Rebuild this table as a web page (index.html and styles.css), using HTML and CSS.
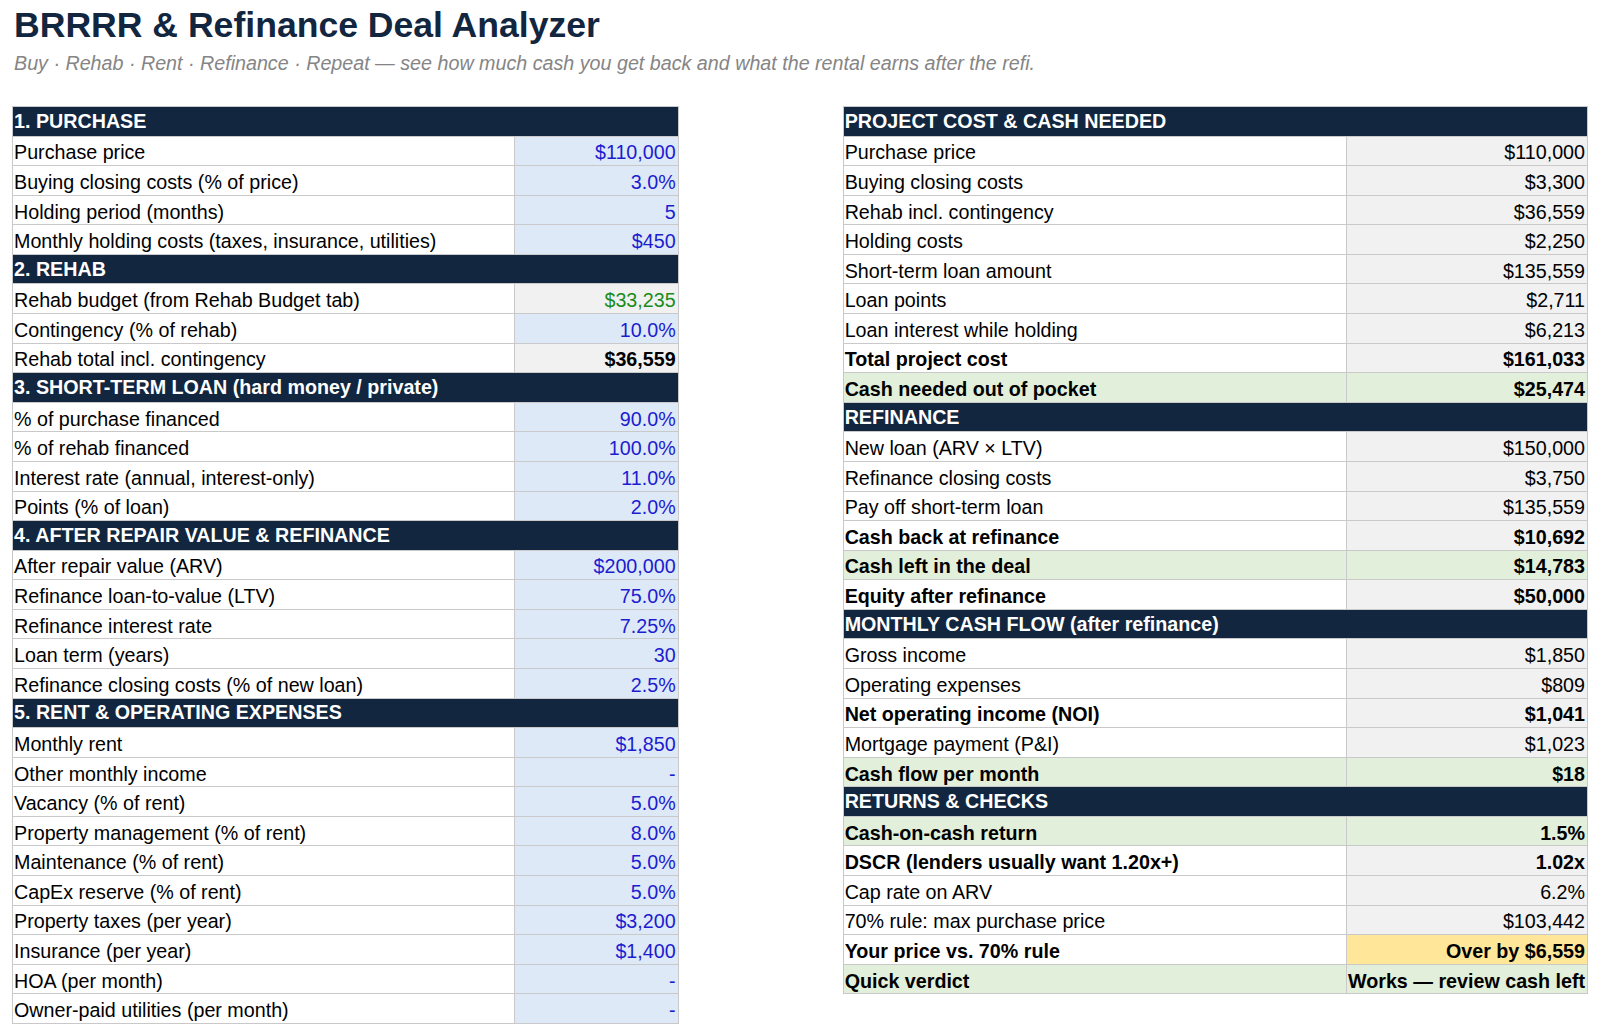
FILE: index.html
```html
<!DOCTYPE html>
<html>
<head>
    <meta charset="UTF-8">
    <title>BRRRR &amp; Refinance Deal Analyzer</title>
    <link rel="stylesheet" href="styles.css">
</head>
<body>
    <h1 class="title">BRRRR &amp; Refinance Deal Analyzer</h1>
    <p class="subtitle">Buy · Rehab · Rent · Refinance · Repeat — see how much cash you get back and what the rental earns after the refi.</p>

    <div class="sheets">
        <table class="sheet sheet-inputs">
            <colgroup><col class="col-label"><col class="col-value"></colgroup>
            <tr class="section"><td colspan="2">1. PURCHASE</td></tr>
            <tr><td>Purchase price</td><td class="input">$110,000</td></tr>
            <tr><td>Buying closing costs (% of price)</td><td class="input">3.0%</td></tr>
            <tr><td>Holding period (months)</td><td class="input">5</td></tr>
            <tr><td>Monthly holding costs (taxes, insurance, utilities)</td><td class="input">$450</td></tr>

            <tr class="section"><td colspan="2">2. REHAB</td></tr>
            <tr><td>Rehab budget (from Rehab Budget tab)</td><td class="calc linked">$33,235</td></tr>
            <tr><td>Contingency (% of rehab)</td><td class="input">10.0%</td></tr>
            <tr class="strong"><td class="plain">Rehab total incl. contingency</td><td class="calc">$36,559</td></tr>

            <tr class="section"><td colspan="2">3. SHORT-TERM LOAN (hard money / private)</td></tr>
            <tr><td>% of purchase financed</td><td class="input">90.0%</td></tr>
            <tr><td>% of rehab financed</td><td class="input">100.0%</td></tr>
            <tr><td>Interest rate (annual, interest-only)</td><td class="input">11.0%</td></tr>
            <tr><td>Points (% of loan)</td><td class="input">2.0%</td></tr>

            <tr class="section"><td colspan="2">4. AFTER REPAIR VALUE &amp; REFINANCE</td></tr>
            <tr><td>After repair value (ARV)</td><td class="input">$200,000</td></tr>
            <tr><td>Refinance loan-to-value (LTV)</td><td class="input">75.0%</td></tr>
            <tr><td>Refinance interest rate</td><td class="input">7.25%</td></tr>
            <tr><td>Loan term (years)</td><td class="input">30</td></tr>
            <tr><td>Refinance closing costs (% of new loan)</td><td class="input">2.5%</td></tr>

            <tr class="section"><td colspan="2">5. RENT &amp; OPERATING EXPENSES</td></tr>
            <tr><td>Monthly rent</td><td class="input">$1,850</td></tr>
            <tr><td>Other monthly income</td><td class="input">-</td></tr>
            <tr><td>Vacancy (% of rent)</td><td class="input">5.0%</td></tr>
            <tr><td>Property management (% of rent)</td><td class="input">8.0%</td></tr>
            <tr><td>Maintenance (% of rent)</td><td class="input">5.0%</td></tr>
            <tr><td>CapEx reserve (% of rent)</td><td class="input">5.0%</td></tr>
            <tr><td>Property taxes (per year)</td><td class="input">$3,200</td></tr>
            <tr><td>Insurance (per year)</td><td class="input">$1,400</td></tr>
            <tr><td>HOA (per month)</td><td class="input">-</td></tr>
            <tr><td>Owner-paid utilities (per month)</td><td class="input">-</td></tr>
        </table>

        <table class="sheet sheet-results">
            <colgroup><col class="col-label"><col class="col-value"></colgroup>
            <tr class="section"><td colspan="2">PROJECT COST &amp; CASH NEEDED</td></tr>
            <tr><td>Purchase price</td><td class="calc">$110,000</td></tr>
            <tr><td>Buying closing costs</td><td class="calc">$3,300</td></tr>
            <tr><td>Rehab incl. contingency</td><td class="calc">$36,559</td></tr>
            <tr><td>Holding costs</td><td class="calc">$2,250</td></tr>
            <tr><td>Short-term loan amount</td><td class="calc">$135,559</td></tr>
            <tr><td>Loan points</td><td class="calc">$2,711</td></tr>
            <tr><td>Loan interest while holding</td><td class="calc">$6,213</td></tr>
            <tr class="strong"><td>Total project cost</td><td class="calc">$161,033</td></tr>
            <tr class="strong key"><td>Cash needed out of pocket</td><td>$25,474</td></tr>

            <tr class="section"><td colspan="2">REFINANCE</td></tr>
            <tr><td>New loan (ARV × LTV)</td><td class="calc">$150,000</td></tr>
            <tr><td>Refinance closing costs</td><td class="calc">$3,750</td></tr>
            <tr><td>Pay off short-term loan</td><td class="calc">$135,559</td></tr>
            <tr class="strong"><td>Cash back at refinance</td><td class="calc">$10,692</td></tr>
            <tr class="strong key"><td>Cash left in the deal</td><td>$14,783</td></tr>
            <tr class="strong"><td>Equity after refinance</td><td class="calc">$50,000</td></tr>

            <tr class="section"><td colspan="2">MONTHLY CASH FLOW (after refinance)</td></tr>
            <tr><td>Gross income</td><td class="calc">$1,850</td></tr>
            <tr><td>Operating expenses</td><td class="calc">$809</td></tr>
            <tr class="strong"><td>Net operating income (NOI)</td><td class="calc">$1,041</td></tr>
            <tr><td>Mortgage payment (P&amp;I)</td><td class="calc">$1,023</td></tr>
            <tr class="strong key"><td>Cash flow per month</td><td>$18</td></tr>

            <tr class="section"><td colspan="2">RETURNS &amp; CHECKS</td></tr>
            <tr class="strong key"><td>Cash-on-cash return</td><td>1.5%</td></tr>
            <tr class="strong"><td>DSCR (lenders usually want 1.20x+)</td><td class="calc">1.02x</td></tr>
            <tr><td>Cap rate on ARV</td><td class="calc">6.2%</td></tr>
            <tr><td>70% rule: max purchase price</td><td class="calc">$103,442</td></tr>
            <tr class="strong"><td>Your price vs. 70% rule</td><td class="warn">Over by $6,559</td></tr>
            <tr class="strong key"><td>Quick verdict</td><td>Works — review cash left</td></tr>
        </table>
    </div>
</body>
</html>
```

FILE: styles.css
```css
body {
    font-family: "Liberation Sans", Arial, sans-serif;
    margin: 0;
    padding: 0 12px;
    background: #ffffff;
    color: #000000;
}
.title {
    margin: 5px 0 0 2px;
    font-size: 35.6px;
    line-height: 40px;
    font-weight: bold;
    color: #12263f;
}
.subtitle {
    margin: 6px 0 0 2px;
    font-size: 19.7px;
    line-height: 25px;
    font-style: italic;
    color: #858585;
}
.sheets {
    display: flex;
    align-items: flex-start;
    gap: 164px;
    margin-top: 30px;
}
.sheet {
    border-collapse: collapse;
    table-layout: fixed;
    font-size: 19.7px;
}
.sheet-inputs { width: 669px; }
.sheet-inputs .col-value { width: 164px; }
.sheet-results { width: 748px; }
.sheet-results .col-value { width: 241px; }
.sheet td {
    height: 24.58px;
    padding: 4px 2px 0 1px;
    border: 1px solid #c9c9c9;
    white-space: nowrap;
    overflow: hidden;
    vertical-align: middle;
    background: #ffffff;
}
.sheet td + td {
    text-align: right;
}
.sheet .section td {
    height: 28.58px;
    padding-top: 0;
    background: #12263f;
    color: #ffffff;
    font-weight: bold;
    text-align: left;
}
.sheet .input {
    background: #dde9f6;
    color: #1c1cd0;
}
.sheet .calc {
    background: #f1f1f1;
}
.sheet .linked {
    color: #1a8c1a;
}
.sheet .strong td {
    font-weight: bold;
}
.sheet .strong .plain {
    font-weight: normal;
}
.sheet .key td {
    background: #e2efda;
}
.sheet .warn {
    background: #ffe699;
}
```
